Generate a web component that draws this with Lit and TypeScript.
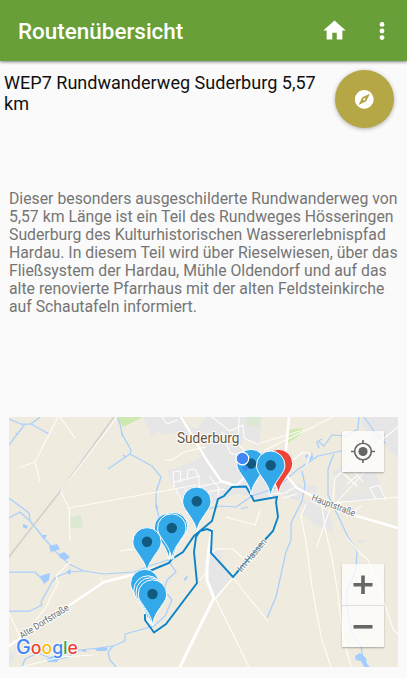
import { LitElement, html, css, svg } from "lit";
import { customElement } from "lit/decorators.js";

type Pin = { x: number; y: number; tip: number; color?: string; dot?: boolean };

const PINS: Pin[] = [
  { x: 278.5, y: 463.5, tip: 494, color: "#ee4438", dot: false },
  { x: 251, y: 463.5, tip: 495 },
  { x: 270.7, y: 465.2, tip: 497 },
  { x: 196.8, y: 501.2, tip: 532 },
  { x: 168.5, y: 527.5, tip: 559, dot: false },
  { x: 173.5, y: 526.5, tip: 559, dot: false },
  { x: 171.8, y: 528, tip: 559.5 },
  { x: 147, y: 541.8, tip: 572 },
  { x: 144.8, y: 583.5, tip: 614, dot: false },
  { x: 148, y: 590, tip: 622, dot: false },
  { x: 150.3, y: 592, tip: 624, dot: false },
  { x: 152.5, y: 594, tip: 625.5 },
];

const pin = ({ x, y, tip, color = "#34a9ea", dot = true }: Pin) => svg`
  <g transform="translate(${x} ${y})">
    <path d="M0 ${tip - y} C-1.2 22 -5 18 -9.5 11 C-12.5 7 -14.2 4 -14.2 0 A14.2 14.2 0 0 1 14.2 0 C14.2 4 12.5 7 9.5 11 C5 18 1.2 22 0 ${tip - y}Z"
      fill=${color} stroke="#fff" stroke-width="1"/>
    ${dot ? svg`<circle r="5.2" fill="#125a80"/>` : ""}
  </g>`;

const AREAS = svg`
  <g fill="#e6e6e6">
    <path d="M143 417H262L259 447L270 462L288 487L284 493L262 499L233 493L224 500L207 500L196 478L172 486L168 470L190 462L205 455L193 455L194 448L205 450V444L177 432L152 437Z"/>
    <path d="M168 471L197 464L211 480L250 476L256 488L218 500L205 510L188 515L176 489Z"/>
    <path d="M361 417H398V458L384 445L371 442L362 425Z"/>
    <path d="M333 473L342 465L376 474L386 498L364 502L337 500Z"/>
    <path d="M303 500L317 505L330 514L334 532L315 525L303 515Z"/>
    <path d="M265 488L290 481L303 486L318 485L316 493L304 492L299 501L283 495Z"/>
    <path d="M211 550L223 551L222 562L233 577L215 598L207 580Z"/>
    <path d="M356 540H367L360 544Z"/><path d="M9 654L16 651L12 662L9 666Z"/>
  </g>
  <path fill="#efebdf" d="M152 437L158 432L178 444L185 437L204 446L192 462L170 470ZM256 445L245 438L241 446L257 459L262 450ZM184 417H206L199 428L187 427Z"/>
  <path fill="#cee9af" d="M118 417H143L123 427L119 422Z"/>
  <path fill="#cee9af" d="M289 430L302 428L304 432L288 443Z"/>
  <path fill="#dce9d2" d="M70 517L81 515L83 527L71 529ZM247 417H260V426H247Z"/>
  <path fill="#e9e7df" d="M337 480L350 466L372 491L340 499Z"/>`;

const WATER = svg`
  <g fill="none" stroke="#a9cffc" stroke-width="1.25" stroke-linejoin="round">
    <path d="M9 419L21 424L31 424L40 417M31 424L49 434M25 424L9 445"/>
    <path d="M117 417L120 424L122 434L131 450L130 454L108 469M126 457L123 455M130 454L152 466L161 477L156 492V506L159 517L155 526"/>
    <path d="M9 498L29 513L30 521L43 537L56 552L69 564L84 571L104 574L134 572L152 565L168 560L176 572L167 580L164 590L172 600L165 616L154 626L125 634V641L113 646L108 652L110 660L116 667"/>
    <path d="M9 518L20 512L30 521M9 572H35L40 577L44 581M56 577L52 582L41 602L42 605L30 611H9M56 577L69 572L84 571"/>
    <path d="M22 667L25 659L38 653L55 660L68 657L80 650L100 648L112 646"/>
    <path d="M203 510L220 506L236 507L252 496L278 487L297 470L318 456L346 450"/>
    <path d="M319 442L324 446L332 435L346 436L358 429L359 417M364 417L374 431L385 443M334 454L331 461L328 469V495L340 520L348 537L357 551L356 570L347 590V605L351 632L361 646L363 658"/>
    <path d="M302 471L305 485L302 501L291 523V540L286 552L276 597L267 618"/>
    <path d="M241 509L248 507M319 448L317 442L322 439"/>
  </g>
  <path fill="#a3ccff" d="M23 524L28 526L26 529L23 527ZM41 535L47 535L44 540ZM15 433L18 433L17 435ZM155 502L158 507L157 512ZM121 430L123 434L122 438ZM40 576L50 573L49 580L44 584ZM59 554L64 552L70 557L66 560L60 558ZM49 546L57 544L51 553ZM57 544L60 549L52 552ZM66 572L71 569L70 575ZM184 579L188 575L187 579L184 581ZM46 660L52 656L60 657L57 662L48 662ZM95 649L101 647L108 648L106 651H97ZM80 651L85 649L87 652ZM305 456L308 453L307 459ZM309 457L312 452L313 458L309 461ZM355 656L360 653L366 658L367 664L370 667L364 667L361 661L356 660Z"/>`;

const STREETS = svg`
  <g fill="none" stroke-linejoin="round" stroke-linecap="round">
    <path d="M114 417L62 489L22 540L9 557" stroke="#d3d1ce" stroke-width="1.7"/>
    <g stroke="#fffdf8" stroke-width="1.1">
      <path d="M117 417L62 489L61 492L69 508L196 485M69 508L70 540M60 417L75 438M58 417L35 462L21 467M35 462L40 482M165 460L172 460L184 452L205 447"/>
      <path d="M174 487L173 472L180 471L181 482M187 480L188 470L195 469L199 478V486M174 482L200 476M176 489L188 514M185 489L194 509"/>
      <path d="M70 562L56 576L58 583L46 607L36 620M9 613L20 637M100 578L104 583M120 551L134 549M22 667L60 657L93 655"/>
      <path d="M162 417L167 424L177 420M212 417L230 431L243 425L244 438L259 445M239 417L238 444L248 454M222 432L230 453L246 457M261 443L303 430M265 450L315 426L333 417M196 487L222 482M200 493L224 489M210 477L219 488L217 504"/>
      <path d="M226 517L255 525L260 511M212 552L217 549H233L244 559M233 578L268 621M216 600L249 667M200 580L206 573M293 460L303 452L311 454L306 466M306 504L301 516L306 542L312 587L322 641L331 667M321 500L325 528L332 558L338 595L343 637L351 667M346 537L358 551L368 560L381 593L393 629L398 634"/>
      <path d="M268 494L285 493L297 486M283 498L297 494M333 500L335 478L350 466L398 427M337 502L370 466L382 457M342 472L357 486M350 467L363 482M370 488L379 485L386 500M370 488L376 499M347 484L359 474M333 503L398 497M331 506L317 546M346 517L361 506"/>
      <path d="M215 599L233 578" stroke-width="1.6"/>
    </g>
    <g stroke="#fff" stroke-width="2.4">
      <path d="M181 417L206 459L221 481L236 486L255 468M289 417L286 450L284 464L286 475L297 488L320 500L350 514L398 528"/>
      <path d="M9 646L46 621L104 582L140 573L154 568"/>
      <path d="M212 530L209 548L207 565V580L214 598L198 630L180 667" stroke-width="3"/>
    </g>
    <g stroke="#0c83c7" stroke-width="1.9" stroke-linejoin="miter" stroke-linecap="butt">
      <path d="M147 572L169 563L172 559L183 552L194 536L200 531L212 521L218 499L224 496L232 487L246 486.500L251 495L254 501L277 497L276 502L278 517L273 531L262 543L233 577L211 553L212 531L207 529L200 531L196 537L194 552L197 583L166 624L154 632.500L145 620V611"/>
    </g>
  </g>`;

@customElement("app-bar")
class AppBar extends LitElement {
  static styles = css`
    :host { display: flex; align-items: center; height: 61px; background: #689f38; color: #fff;
      position: relative; z-index: 1; box-shadow: 0 1px 3px rgba(0,0,0,.5); box-sizing: border-box; padding: 0 15px 0 18px; }
    h1 { flex: 1; margin: 0; font: 500 22.450px/30px Roboto, sans-serif; white-space: nowrap; padding-top: 1px; }
    svg { display: block; fill: #fff; }
    .home { width: 27px; height: 27px; margin-right: 24px; }
    .more { width: 20px; height: 20px; }
  `;
  render() {
    return html`<h1>Routenübersicht</h1>
      <svg class="home" viewBox="0 0 24 24"><path d="M10 20v-6h4v6h5v-8h3L12 3 2 12h3v8z"/></svg>
      <svg class="more" viewBox="0 0 20 20"><circle cx="10" cy="3.400" r="2.400"/><circle cx="10" cy="10" r="2.400"/><circle cx="10" cy="16.600" r="2.400"/></svg>`;
  }
}

@customElement("route-map")
class RouteMap extends LitElement {
  static styles = css`
    :host { display: block; position: relative; width: 389px; height: 250px; background: #efebdf; overflow: hidden; }
    .canvas { display: block; width: 389px; height: 250px; }
    text { font-family: Roboto, sans-serif; paint-order: stroke; stroke-linejoin: round; }
    .town { font-size: 14.500px; fill: #65553a; stroke: #fff; stroke-width: 2px; }
    .street { font-size: 9.500px; fill: #6d6d6d; stroke: #fff; stroke-width: 2px; }
    .logo { font-family: Inter, sans-serif; font-size: 17.500px; font-weight: 500; stroke: #fff; stroke-width: 1.500px; }
    .logo .initial { font-size: 19.500px; }
    .controls { position: absolute; top: 14px; right: 14px; bottom: 20px; width: 42px;
      display: flex; flex-direction: column; justify-content: space-between; }
    .button, .zoom { background: rgba(255,255,255,.75); box-shadow: 0 1px 2px rgba(0,0,0,.3); border-radius: 1px; }
    .button { height: 41px; }
    .zoom { height: 83px; }
    .half { height: 41px; }
    .half + .half { border-top: 1px solid #ddd; }
    .controls svg { display: block; width: 42px; height: 41px; fill: none; stroke: #666; }
  `;
  render() {
    return html`
      <svg class="canvas" viewBox="9 417 389 250">
        ${AREAS}${WATER}${STREETS}
        <text class="town" x="177" y="443" textLength="62.500" lengthAdjust="spacingAndGlyphs">Suderburg</text>
        <text class="street" transform="translate(311 500) rotate(21)" textLength="46" lengthAdjust="spacingAndGlyphs">Hauptstraße</text>
        <text class="street" transform="translate(22 639) rotate(-32)" textLength="56" lengthAdjust="spacingAndGlyphs">Alte Dorfstraße</text>
        <text class="street" transform="translate(241.500 572.500) rotate(-50)" textLength="40" lengthAdjust="spacingAndGlyphs">Im Hassen</text>
        <path d="M236 573.500L262 543" stroke="#0c83c7" stroke-width="1.500" opacity=".5"/>
        ${PINS.map(pin)}
        <path d="M242 467L248 466L246 472Z" fill="#4285f4"/>
        <circle cx="242.400" cy="458.500" r="6.300" fill="#4285f4" stroke="#fff" stroke-width="1.200"/>
        <text class="logo" x="16" y="654" textLength="62" lengthAdjust="spacingAndGlyphs"><tspan class="initial" fill="#4285f4">G</tspan><tspan fill="#ea4335">o</tspan><tspan fill="#fbbc05">o</tspan><tspan fill="#4285f4">g</tspan><tspan fill="#34a853">l</tspan><tspan fill="#ea4335">e</tspan></text>
      </svg>
      <div class="controls">
        <div class="button"><svg viewBox="0 0 42 41" stroke-width="1.600"><circle cx="21" cy="20.500" r="8.300"/><circle cx="21" cy="20.500" r="4.600" fill="#666" stroke="none"/><path d="M21 9v4M21 28v4M9 20.500h4M29 20.500h4"/></svg></div>
        <div class="zoom">
          <div class="half"><svg viewBox="0 0 42 41" stroke-width="3.600"><path d="M11.500 20.800h19M21 11.500v18.500"/></svg></div>
          <div class="half"><svg viewBox="0 0 42 41" stroke-width="3.600"><path d="M11.500 20.800h19"/></svg></div>
        </div>
      </div>`;
  }
}

@customElement("app-root")
class AppRoot extends LitElement {
  static styles = css`
    :host { display: flex; flex-direction: column; width: 407px; height: 678px; background: #fafafa; overflow: hidden; font-family: Roboto, sans-serif; }
    .head { display: flex; justify-content: space-between; height: 128px; padding: 9px 13px 0 4px; box-sizing: border-box; }
    h2 { margin: 2px 0 0; width: 325px; font-weight: 400; font-size: 18.060px; line-height: 21px; color: #111; }
    .fab { width: 59px; height: 58px; border-radius: 50%; background: #b5a646; box-shadow: 0 1px 4px rgba(0,0,0,.3);
      display: flex; align-items: center; justify-content: center; }
    .fab svg { width: 22.500px; height: 22.500px; fill: #fff; }
    p { margin: 1px 0 0 9px; height: 227px; font-size: 15.800px; line-height: 18px; color: #757575; white-space: nowrap; }
    route-map { margin-left: 9px; }
  `;
  render() {
    return html`
      <app-bar></app-bar>
      <div class="head">
        <h2>WEP7 Rundwanderweg Suderburg 5,57 km</h2>
        <div class="fab"><svg viewBox="0 0 24 24"><path d="M12 10.900c-.61 0-1.100.49-1.100 1.100s.49 1.100 1.100 1.100c.61 0 1.100-.49 1.100-1.100s-.49-1.100-1.100-1.100zM12 2C6.480 2 2 6.480 2 12s4.480 10 10 10 10-4.480 10-10S17.520 2 12 2zm2.190 12.190L6 18l3.810-8.190L18 6l-3.810 8.190z"/></svg></div>
      </div>
      <p>Dieser besonders ausgeschilderte Rundwanderweg von<br>5,57 km Länge ist ein Teil des Rundweges Hösseringen<br>Suderburg des Kulturhistorischen Wassererlebnispfad<br>Hardau. In diesem Teil wird über Rieselwiesen, über das<br>Fließsystem der Hardau, Mühle Oldendorf und auf das<br>alte renovierte Pfarrhaus mit der alten Feldsteinkirche<br>auf Schautafeln informiert.</p>
      <route-map></route-map>`;
  }
}
